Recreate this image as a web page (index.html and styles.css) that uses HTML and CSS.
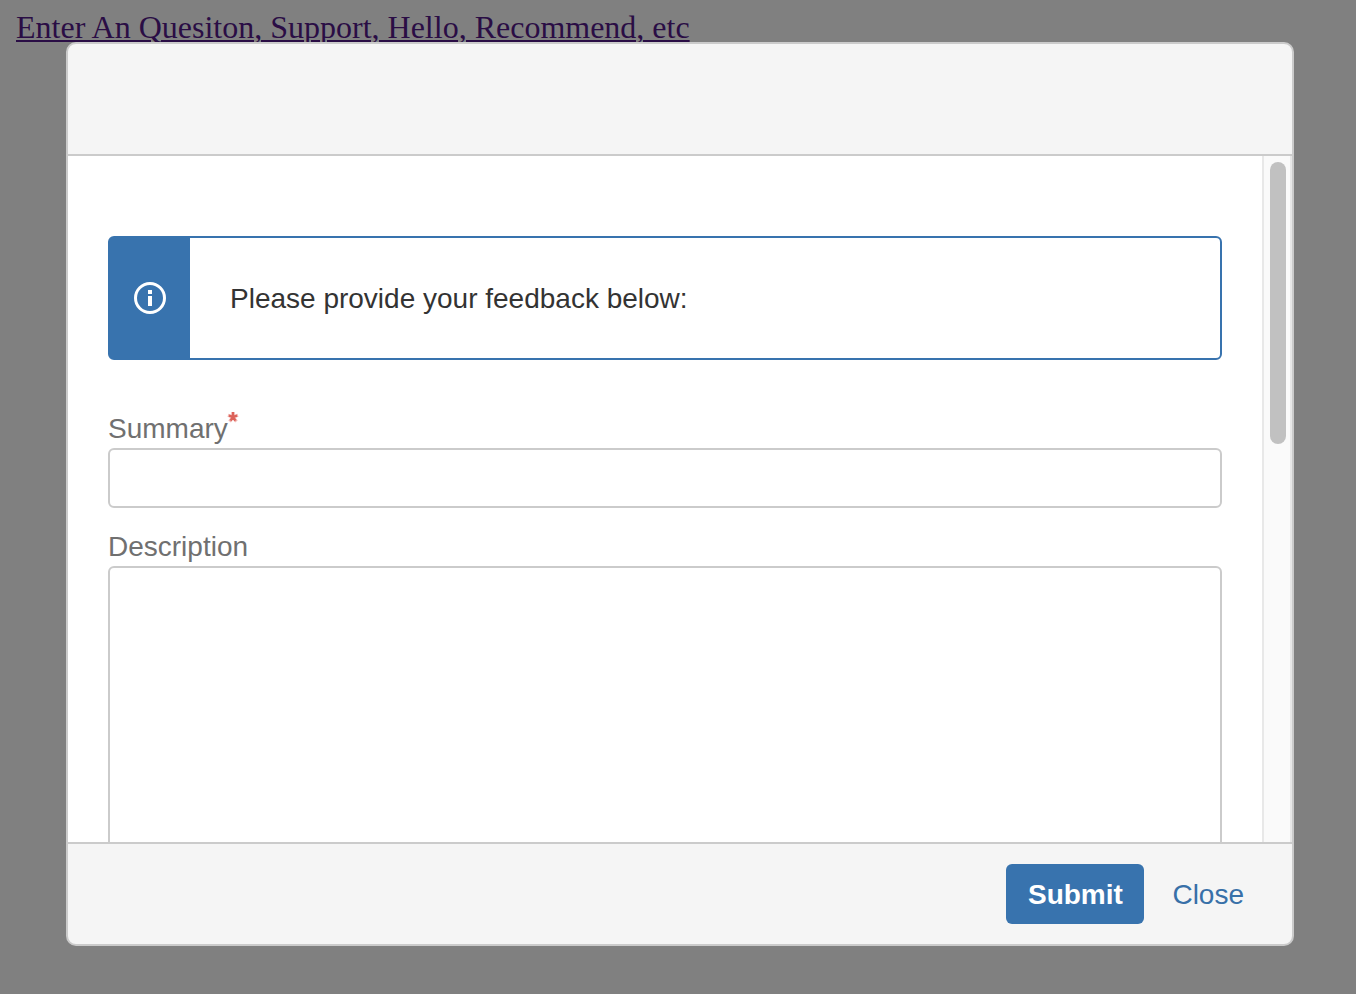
FILE: index.html
```html
<!DOCTYPE html>
<html lang="en">
<head>
<meta charset="utf-8">
<title>Feedback</title>
<link rel="stylesheet" href="styles.css">
</head>
<body>
<a class="page-link" href="#">Enter An Quesiton, Support, Hello, Recommend, etc</a>
<div class="overlay">
  <section class="dialog" role="dialog" aria-label="Feedback">
    <header class="dialog-header"></header>
    <div class="dialog-body">
      <form class="form">
        <div class="message">
          <div class="message-icon">
            <svg width="32" height="32" viewBox="0 0 32 32" aria-hidden="true">
              <circle cx="16" cy="16" r="14.5" fill="none" stroke="#fff" stroke-width="3"/>
              <path d="M14 8h4v4h-4zM14 14h4v10h-4z" fill="#fff"/>
            </svg>
          </div>
          <p class="message-text">Please provide your feedback below:</p>
        </div>
        <label class="label" for="summary">Summary<svg class="required" width="12" height="12" viewBox="0 0 12 12" aria-hidden="true">
            <path d="M6 6V1M6 6L1 4.2M6 6L11 4.2M6 6L2.6 10.4M6 6L9.4 10.4" stroke="#f2b8b3" stroke-width="3.2" fill="none"/>
            <path d="M6 6V1M6 6L2 4.6M6 6L10 4.6M6 6L3.6 9.6M6 6L8.4 9.6" stroke="#dc625a" stroke-width="2.3" fill="none"/>
          </svg></label>
        <input class="field" id="summary" type="text">
        <label class="label" for="description">Description</label>
        <textarea class="field field-area" id="description"></textarea>
      </form>
      <div class="scroll-track"><div class="scroll-thumb"></div></div>
    </div>
    <footer class="dialog-footer">
      <button class="submit" type="button">Submit</button>
      <a class="close" href="#">Close</a>
    </footer>
  </section>
</div>
</body>
</html>
```

FILE: styles.css
```css
* { box-sizing: border-box; }

body {
  margin: 0;
  padding: 9px 16px;
  height: 994px;
  overflow: hidden;
  background: #808080;
  font-family: "Liberation Sans", Arial, sans-serif;
  font-size: 28px;
}

.page-link {
  display: block;
  width: max-content;
  font: 32px/37px "Liberation Serif", "Times New Roman", serif;
  color: #2a0d45;
  text-decoration: underline;
  text-decoration-thickness: 2px;
  text-underline-offset: 2px;
}

.overlay {
  position: absolute;
  inset: 0;
  display: flex;
  justify-content: center;
  align-items: flex-start;
  padding: 42px 62px 0 66px;
}

.dialog {
  display: flex;
  flex-direction: column;
  width: 1228px;
  height: 904px;
  border: 2px solid #cbcbcb;
  border-radius: 10px;
  background: #f5f5f5;
  overflow: hidden;
}

.dialog-header {
  height: 112px;
  border-bottom: 2px solid #cbcbcb;
}

.dialog-body {
  display: flex;
  height: 686px;
  background: #fff;
  overflow: hidden;
}

.form {
  flex: 1;
  padding: 80px 40px 0;
}

.message {
  display: flex;
  height: 124px;
  margin-bottom: 46px;
  border: 2px solid #3873ae;
  border-radius: 6px;
}

.message-icon {
  display: flex;
  align-items: center;
  justify-content: center;
  width: 80px;
  background: #3873ae;
}

.message-icon svg { display: block; }

.message-text {
  margin: 0;
  padding-left: 40px;
  line-height: 122px;
  height: 120px;
  color: #333;
}

.label {
  display: flex;
  height: 42px;
  color: #707070;
  line-height: 46px;
}

.required {
  margin: 5px 0 0 -1px;
}

.field {
  display: block;
  width: 1114px;
  height: 60px;
  margin: 0 0 16px;
  padding: 8px;
  border: 2px solid #cbcbcb;
  border-radius: 6px;
  background: #fff;
  font: inherit;
  outline: 0;
}

.field-area {
  height: 400px;
  resize: none;
}

.scroll-track {
  width: 30px;
  padding: 6px 4px 0 6px;
  border: solid #e8e8e8;
  border-width: 0 2px;
  background: #fafafa;
}

.scroll-thumb {
  width: 16px;
  height: 282px;
  border-radius: 8px;
  background: #c1c1c1;
}

.dialog-footer {
  display: flex;
  align-items: center;
  justify-content: flex-end;
  height: 102px;
  padding-right: 48px;
  gap: 28px;
  border-top: 2px solid #cbcbcb;
}

.submit {
  width: 138px;
  height: 60px;
  padding: 2px 0 0;
  border: 0;
  border-radius: 6px;
  background: #3873ae;
  color: #fff;
  font: bold 28px/58px "Liberation Sans", Arial, sans-serif;
}

.close {
  padding-top: 2px;
  color: #3870a8;
  text-decoration: none;
}
```
